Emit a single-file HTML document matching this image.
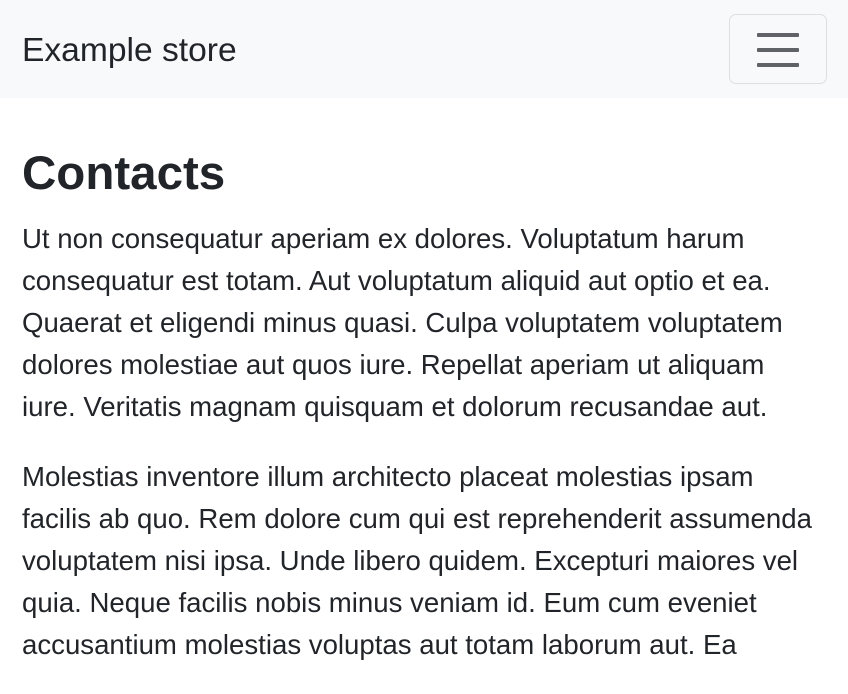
<!DOCTYPE html>
<html><head><meta charset="utf-8"><style>
html,body{margin:0;padding:0;background:#fff;width:848px;height:645px;overflow:hidden}
body{font-family:"Liberation Sans",sans-serif;color:#212529}
.nav{height:98px;background:#f8f9fa;position:relative}
.brand{position:absolute;left:22px;top:30px;font-size:33.6px;line-height:42px;color:#212529}
.tog{position:absolute;left:729px;top:14px;width:96px;height:68px;border:1px solid rgba(0,0,0,.1);border-radius:7px}
.tog span{position:absolute;left:27px;width:42px;height:3.5px;background:#5f6266;border-radius:1px}
h1{margin:0;position:absolute;left:22px;top:144px;font-size:47.5px;line-height:60px;font-weight:bold}
.c{position:absolute;left:22px;top:218px;font-size:27.6px;line-height:42px;white-space:nowrap}
p{margin:0 0 28px}
</style></head><body>
<div class="nav"><div class="brand">Example store</div>
<div class="tog"><span style="top:18px"></span><span style="top:33px"></span><span style="top:48px"></span></div></div>
<h1>Contacts</h1>
<div class="c">
<p>Ut non consequatur aperiam ex dolores. Voluptatum harum<br>consequatur est totam. Aut voluptatum aliquid aut optio et ea.<br>Quaerat et eligendi minus quasi. Culpa voluptatem voluptatem<br>dolores molestiae aut quos iure. Repellat aperiam ut aliquam<br>iure. Veritatis magnam quisquam et dolorum recusandae aut.</p>
<p>Molestias inventore illum architecto placeat molestias ipsam<br>facilis ab quo. Rem dolore cum qui est reprehenderit assumenda<br>voluptatem nisi ipsa. Unde libero quidem. Excepturi maiores vel<br>quia. Neque facilis nobis minus veniam id. Eum cum eveniet<br>accusantium molestias voluptas aut totam laborum aut. Ea</p>
</div>
</body></html>
